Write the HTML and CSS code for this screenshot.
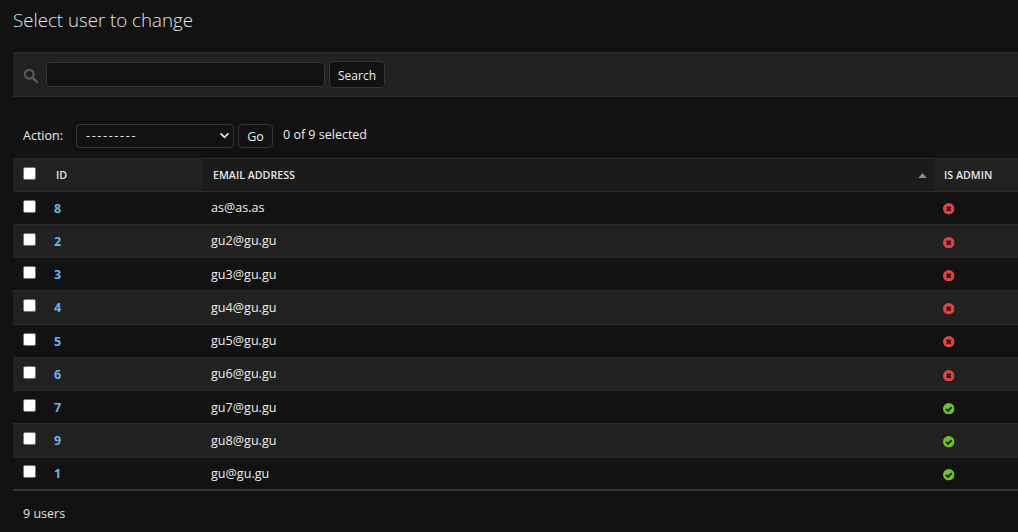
FILE: index.html
```html
<!DOCTYPE html>
<html lang="en">
<head>
<meta charset="utf-8">
<title>Select user to change</title>
<link rel="stylesheet" href="styles.css">
</head>
<body>
<main class="content">
  <h1 class="title">Select user to change</h1>
  <form class="toolbar">
    <svg class="search-icon" viewBox="0 0 16 16" width="16" height="16"><circle cx="6.6" cy="6.6" r="4.7" fill="none" stroke="#5a5a5a" stroke-width="2.4"/><path d="M10.2 10.2 14.6 14.6" stroke="#5a5a5a" stroke-width="2.8" stroke-linecap="round"/></svg>
    <input class="search-input" type="text">
    <button class="btn btn-search" type="button">Search</button>
  </form>
  <div class="actions">
    <span class="action-label">Action:</span>
    <span class="select"><span class="dashes">---------</span>
      <svg class="chevron" viewBox="0 0 12 8" width="12" height="8"><path d="M1.5 1.5 6 6l4.5-4.5" fill="none" stroke="#e6e6e6" stroke-width="2"/></svg>
    </span>
    <button class="btn btn-go" type="button">Go</button>
    <span class="counter">0 of 9 selected</span>
  </div>
  <table class="results">
    <thead>
      <tr>
        <th class="col-check"><span class="check"></span></th>
        <th class="col-id">ID</th>
        <th class="col-email sorted">Email address<svg class="sort" viewBox="0 0 10 6" width="10" height="6"><path d="M5 0l5 6H0z" fill="#8a8a8a"/></svg></th>
        <th class="col-admin">Is admin</th>
      </tr>
    </thead>
    <tbody>
      <tr><td class="col-check"><span class="check"></span></td><td class="col-id"><a>8</a></td><td class="col-email">as@as.as</td><td class="col-admin"><svg class="bool"><use href="#no"/></svg></td></tr>
      <tr><td class="col-check"><span class="check"></span></td><td class="col-id"><a>2</a></td><td class="col-email">gu2@gu.gu</td><td class="col-admin"><svg class="bool"><use href="#no"/></svg></td></tr>
      <tr><td class="col-check"><span class="check"></span></td><td class="col-id"><a>3</a></td><td class="col-email">gu3@gu.gu</td><td class="col-admin"><svg class="bool"><use href="#no"/></svg></td></tr>
      <tr><td class="col-check"><span class="check"></span></td><td class="col-id"><a>4</a></td><td class="col-email">gu4@gu.gu</td><td class="col-admin"><svg class="bool"><use href="#no"/></svg></td></tr>
      <tr><td class="col-check"><span class="check"></span></td><td class="col-id"><a>5</a></td><td class="col-email">gu5@gu.gu</td><td class="col-admin"><svg class="bool"><use href="#no"/></svg></td></tr>
      <tr><td class="col-check"><span class="check"></span></td><td class="col-id"><a>6</a></td><td class="col-email">gu6@gu.gu</td><td class="col-admin"><svg class="bool"><use href="#no"/></svg></td></tr>
      <tr><td class="col-check"><span class="check"></span></td><td class="col-id"><a>7</a></td><td class="col-email">gu7@gu.gu</td><td class="col-admin"><svg class="bool"><use href="#yes"/></svg></td></tr>
      <tr><td class="col-check"><span class="check"></span></td><td class="col-id"><a>9</a></td><td class="col-email">gu8@gu.gu</td><td class="col-admin"><svg class="bool"><use href="#yes"/></svg></td></tr>
      <tr><td class="col-check"><span class="check"></span></td><td class="col-id"><a>1</a></td><td class="col-email">gu@gu.gu</td><td class="col-admin"><svg class="bool"><use href="#yes"/></svg></td></tr>
    </tbody>
  </table>
  <p class="paginator">9 users</p>
</main>
<svg class="defs" width="0" height="0">
  <symbol id="no" viewBox="0 0 11 11"><circle cx="5.5" cy="5.5" r="5.5" fill="#dd4646"/><path d="M3.6 3.6l3.8 3.8M7.4 3.6 3.6 7.4" stroke="#2b1212" stroke-width="1.8"/></symbol>
  <symbol id="yes" viewBox="0 0 11 11"><circle cx="5.5" cy="5.5" r="5.5" fill="#70bf2b"/><path d="M2.8 5.6l2 2 3.5-3.6" fill="none" stroke="#16240a" stroke-width="1.8"/></symbol>
</svg>
</body>
</html>
```
FILE: styles.css
```css
* { box-sizing: border-box; }
html, body { margin: 0; height: 100%; }
body {
  background: #121212;
  color: #eeeeee;
  font-family: "Open Sans", "Noto Sans", sans-serif;
  font-size: 13px;
  overflow: hidden;
}
.content { padding: 0 0 0 13px; width: 1018px; }
.title {
  margin: 0;
  height: 52px;
  padding-top: 6px;
  font-size: 18.7px;
  line-height: 27px;
  font-weight: 300;
  color: #e0e6e6;
}
.toolbar {
  display: flex;
  align-items: center;
  height: 45px;
  background: #212121;
  border-top: 1px solid #2a2a2a;
  border-bottom: 1px solid #2a2a2a;
  padding-left: 10px;
}
.search-icon { width: 15px; height: 15px; margin-right: 8px; margin-top: 1px; }
.search-input {
  width: 279px;
  height: 25px;
  background: #121212;
  border: 1px solid #353535;
  border-radius: 4px;
  margin-right: 4px;
}
.btn {
  background: #121212;
  color: #eeeeee;
  border: 1px solid #353535;
  border-radius: 4px;
  font: inherit;
  font-size: 12px;
  padding: 0;
}
.btn-search { width: 56px; height: 27px; padding-top: 2px; }
.actions {
  display: flex;
  align-items: center;
  height: 61px;
  padding: 16px 0 0 10px;
}
.action-label { width: 53px; font-size: 12.5px; }
.select {
  display: flex;
  align-items: center;
  justify-content: space-between;
  width: 158px;
  height: 24px;
  background: #121212;
  border: 1px solid #353535;
  border-radius: 4px;
  padding: 0 3px 0 9px;
  font-size: 12.5px;
  margin-right: 4px;
}
.dashes { letter-spacing: 1.65px; }
.chevron { width: 11px; height: 7px; }
.btn-go { width: 35px; height: 24px; font-size: 12.5px; margin-right: 10px; padding-top: 1px; }
.counter { font-size: 12.5px; margin-top: -2px; }
.results { border-collapse: collapse; width: 1005px; table-layout: fixed; }
.results th {
  height: 32.5px;
  background: #212121;
  border-top: 1px solid #2a2a2a;
  border-bottom: 1px solid #2a2a2a;
  color: #e6e6e6;
  font-size: 10.7px;
  font-weight: 600;
  text-align: left;
  text-transform: uppercase;
  padding: 0;
}
.results td {
  height: 33.25px;
  border-bottom: 1px solid #2a2a2a;
  font-size: 12.6px;
  padding: 1px 0 0;
}
.results tbody tr:nth-child(even) td { background: #212121; }
.results tbody tr:last-child td { border-bottom: 2px solid #353535; }
.col-check { width: 33px; }
.results th.col-check { padding-top: 1px; }
.col-id { width: 157px; }
.col-email { width: 731px; }
.results th.col-id { padding-left: 10px; }
.results td.col-id { padding-left: 8px; }
.results th.col-email { padding-left: 10px; position: relative; }
.results td.col-email { padding: 0 0 0 8px; }
.results th.sorted { background: #1b1b1b; }
.results th.col-admin { padding-left: 10px; }
.results td.col-admin { padding: 3px 0 0 9px; }
.check {
  display: block;
  width: 13px;
  height: 13px;
  margin: -4px 0 0 10px;
  background: #ffffff;
  border: 1px solid #767676;
  border-radius: 2px;
}
.results a { color: #6db3e6; font-weight: 700; font-size: 12.5px; }
.sort { position: absolute; right: 7px; top: 14px; width: 9px; height: 5px; }
.bool { width: 11.5px; height: 11.5px; display: block; }
.paginator { margin: 0; padding: 14px 0 0 10px; font-size: 12.5px; line-height: 18px; color: #e0e0e0; }
.defs { position: absolute; }
```
